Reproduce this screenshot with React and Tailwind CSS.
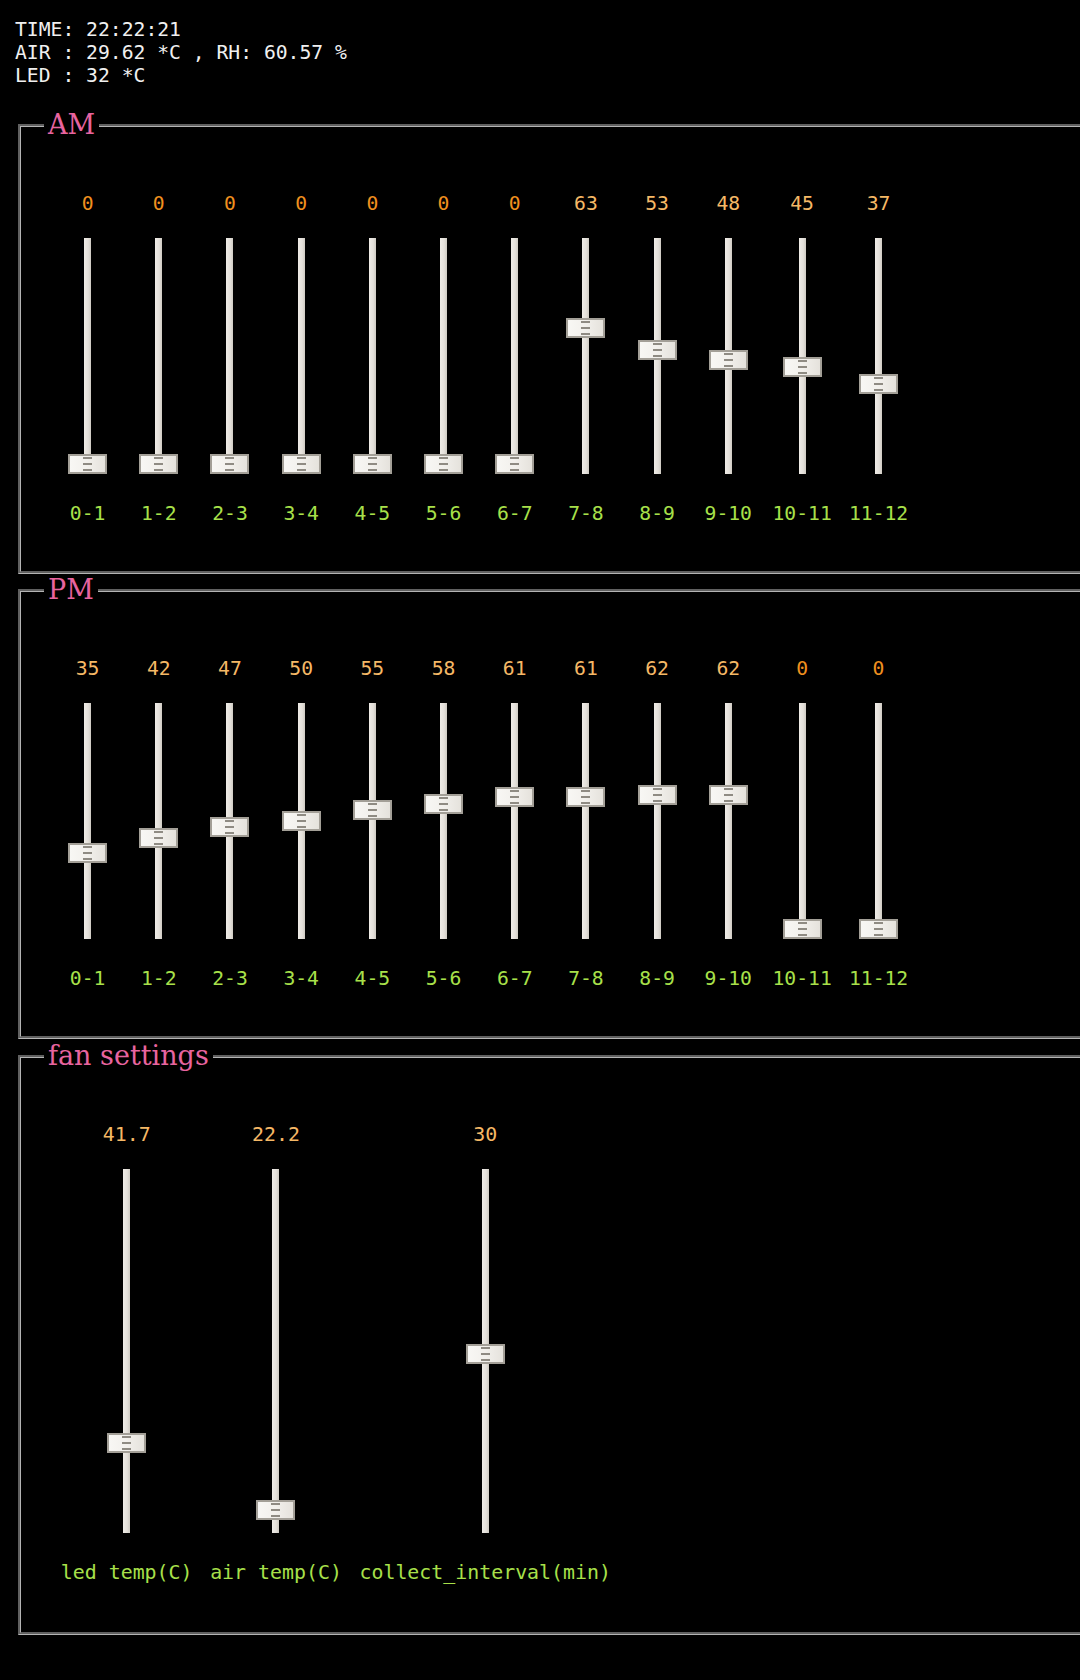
const HOURS = ['0-1', '1-2', '2-3', '3-4', '4-5', '5-6', '6-7', '7-8', '8-9', '9-10', '10-11', '11-12'];
const AM = [0, 0, 0, 0, 0, 0, 0, 63, 53, 48, 45, 37];
const PM = [35, 42, 47, 50, 55, 58, 61, 61, 62, 62, 0, 0];

const FAN = [
  { label: 'led temp(C)', value: '41.7', frac: (41.7 - 30) / 50 },
  { label: 'air temp(C)', value: '22.2', frac: (22.2 - 20) / 60 },
  { label: 'collect_interval(min)', value: '30', frac: (30 - 1) / 59 },
];

function Thumb({ top }) {
  return (
    <div
      className="absolute left-0 w-[39px] h-[20px] border-2 border-[#a39f97] bg-[linear-gradient(to_right,#f8f7f4,#f2f0ec_50%,#e5e2dc)] flex flex-col items-center justify-center gap-[4px]"
      style={{ top }}
    >
      <span className="block w-[9px] h-[2px] bg-[#8f8b83]" />
      <span className="block w-[9px] h-[2px] bg-[#8f8b83]" />
      <span className="block w-[9px] h-[2px] bg-[#8f8b83]" />
    </div>
  );
}

function Slider({ value, frac, label, tall, dim }) {
  const travel = (tall ? 364 : 236) - 20;
  return (
    <div className={`flex flex-col items-center ${tall ? 'px-[8.8px] text-[19.9px]' : 'px-[8.6px]'}`}>
      <div className={`min-w-[54px] text-center leading-[23px] ${dim ? 'text-[#f0901f]' : 'text-[#f5b866]'}`}>
        {value}
      </div>
      <div className={`relative mt-[23px] w-[39px] ${tall ? 'h-[364px]' : 'h-[236px]'}`}>
        <div className="mx-auto w-[7px] h-full bg-[linear-gradient(to_right,#efece7,#e4e0da_60%,#cfcbc3)]" />
        <Thumb top={travel * (1 - frac)} />
      </div>
      <div className="mt-[27.5px] whitespace-nowrap leading-[23px] text-[#a8e04a]">{label}</div>
    </div>
  );
}

function Group({ title, children, className = '', pad = 'pb-[46.5px]' }) {
  return (
    <fieldset className={`ml-[18px] w-[1100px] border-[3px] [border-style:groove] border-[#b4b4b4] ${className}`}>
      <legend className="ml-[23px] px-[4px] text-[27px] leading-[32px] text-[#e8649f] font-['DejaVu_Serif',serif]">
        {title}
      </legend>
      <div className={`flex pl-[31px] pt-[51px] ${pad}`}>{children}</div>
    </fieldset>
  );
}

export default function App() {
  return (
    <div className="min-h-screen w-full overflow-hidden bg-black text-[19.7px] font-['DejaVu_Sans_Mono',monospace]">
      {/* Status */}
      <div className="pt-[18px] pl-[15px] leading-[23px] text-[#f0f0f0] whitespace-pre">
        <div>TIME: 22:22:21</div>
        <div>AIR : 29.62 *C , RH: 60.57 %</div>
        <div>LED : 32 *C</div>
      </div>

      <div className="mt-[22px]">
        <Group title="AM">
          {AM.map((v, i) => (
            <Slider key={i} value={v} frac={v / 100} label={HOURS[i]} dim={v === 0} />
          ))}
        </Group>

        <Group title="PM">
          {PM.map((v, i) => (
            <Slider key={i} value={v} frac={v / 100} label={HOURS[i]} dim={v === 0} />
          ))}
        </Group>

        <Group title="fan settings" className="mt-[1px]" pad="pb-[48.5px]">
          {FAN.map((f) => (
            <Slider key={f.label} value={f.value} frac={f.frac} label={f.label} tall />
          ))}
        </Group>
      </div>
    </div>
  );
}
